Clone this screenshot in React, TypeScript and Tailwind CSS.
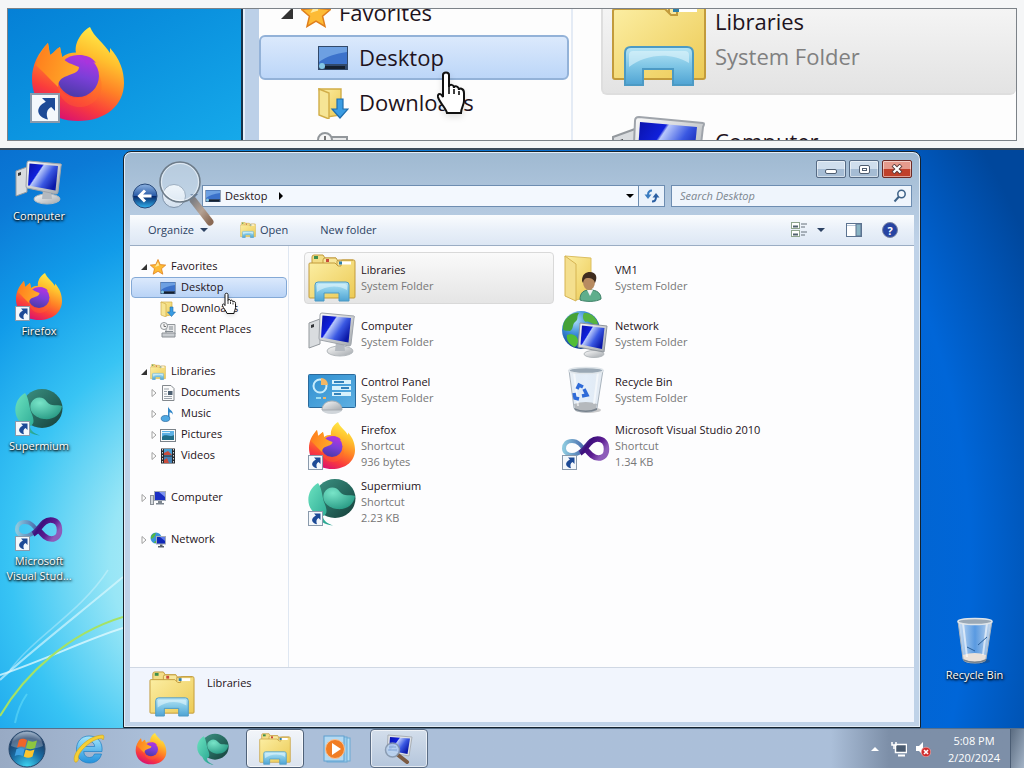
import { type ReactNode } from "react"
import clsx from "clsx"

type IconProps = { className?: string }

const Gradients = () => (
  <svg width="0" height="0" className="absolute" aria-hidden="true">
    <defs>
      <linearGradient id="fox" x1="0.8" y1="0" x2="0.35" y2="1">
        <stop offset="0" stopColor="#fff44f" />
        <stop offset="0.3" stopColor="#ffc02e" />
        <stop offset="0.55" stopColor="#ff8026" />
        <stop offset="0.78" stopColor="#fa3c3c" />
        <stop offset="1" stopColor="#d81172" />
      </linearGradient>
      <linearGradient id="foxHead" x1="0" y1="0" x2="1" y2="0.3">
        <stop offset="0" stopColor="#ff7a1c" />
        <stop offset="1" stopColor="#ffa928" />
      </linearGradient>
      <linearGradient id="globePurple" x1="0.7" y1="0" x2="0.4" y2="1">
        <stop offset="0" stopColor="#b833e1" />
        <stop offset="0.5" stopColor="#7b3fd8" />
        <stop offset="1" stopColor="#4c3aa8" />
      </linearGradient>
      <linearGradient id="folder" x1="0" y1="0" x2="1" y2="1">
        <stop offset="0" stopColor="#fcefa5" />
        <stop offset="1" stopColor="#ecca55" />
      </linearGradient>
      <linearGradient id="holder" x1="0" y1="0" x2="0" y2="1">
        <stop offset="0" stopColor="#b9e6f5" />
        <stop offset="0.5" stopColor="#7fc6e6" />
        <stop offset="1" stopColor="#4fa3d3" />
      </linearGradient>
      <linearGradient id="screen" x1="0" y1="0" x2="1" y2="0.6">
        <stop offset="0" stopColor="#0a12a8" />
        <stop offset="0.38" stopColor="#1020dc" />
        <stop offset="0.42" stopColor="#b8c8fb" />
        <stop offset="0.7" stopColor="#3a58e2" />
        <stop offset="1" stopColor="#0a18a8" />
      </linearGradient>
      <linearGradient id="metal" x1="0" y1="0" x2="1" y2="1">
        <stop offset="0" stopColor="#fafafa" />
        <stop offset="1" stopColor="#a3a8ad" />
      </linearGradient>
      <linearGradient id="tealDark" x1="0" y1="0" x2="1" y2="1">
        <stop offset="0" stopColor="#3d9484" />
        <stop offset="0.55" stopColor="#25675d" />
        <stop offset="1" stopColor="#163d38" />
      </linearGradient>
      <linearGradient id="tealLight" x1="0" y1="0" x2="1" y2="1">
        <stop offset="0" stopColor="#6ce3c0" />
        <stop offset="1" stopColor="#1e9c8a" />
      </linearGradient>
      <radialGradient id="tealBall" cx="0.3" cy="0.25" r="0.8">
        <stop offset="0" stopColor="#78e4c8" />
        <stop offset="1" stopColor="#2a9c86" />
      </radialGradient>
      <radialGradient id="earth" cx="0.35" cy="0.25" r="0.8">
        <stop offset="0" stopColor="#aeddf8" />
        <stop offset="0.45" stopColor="#3a8bd8" />
        <stop offset="1" stopColor="#0c3585" />
      </radialGradient>
      <linearGradient id="panel" x1="0" y1="0" x2="1" y2="1">
        <stop offset="0" stopColor="#2f8fd0" />
        <stop offset="1" stopColor="#5fb0e2" />
      </linearGradient>
      <linearGradient id="loopLeft" x1="0" y1="0" x2="1" y2="0">
        <stop offset="0" stopColor="#8cc8de" />
        <stop offset="1" stopColor="#3f5fa6" />
      </linearGradient>
      <linearGradient id="loopRight" x1="0" y1="0" x2="1" y2="0.5">
        <stop offset="0" stopColor="#5b6fb8" />
        <stop offset="0.35" stopColor="#3d0f7c" />
        <stop offset="0.7" stopColor="#5c1c92" />
        <stop offset="1" stopColor="#8d5cba" />
      </linearGradient>
      <linearGradient id="bin" x1="0" y1="0" x2="1" y2="0">
        <stop offset="0" stopColor="#e8eef4" stopOpacity="0.9" />
        <stop offset="0.5" stopColor="#c6dcf2" stopOpacity="0.45" />
        <stop offset="1" stopColor="#e4eaf0" stopOpacity="0.9" />
      </linearGradient>
      <linearGradient id="back" x1="0" y1="0" x2="0" y2="1">
        <stop offset="0" stopColor="#8fb4e2" />
        <stop offset="0.48" stopColor="#2b5ca8" />
        <stop offset="0.52" stopColor="#08296b" />
        <stop offset="1" stopColor="#32b4f0" />
      </linearGradient>
      <radialGradient id="orb" cx="0.5" cy="1" r="1">
        <stop offset="0" stopColor="#3fd8f4" />
        <stop offset="0.45" stopColor="#1a6fa6" />
        <stop offset="0.8" stopColor="#1b3c66" />
        <stop offset="1" stopColor="#8fa9c4" />
      </radialGradient>
      <linearGradient id="ie" x1="0" y1="0" x2="0" y2="1">
        <stop offset="0" stopColor="#a4e7fc" />
        <stop offset="1" stopColor="#2391dc" />
      </linearGradient>
      <linearGradient id="handle" x1="0" y1="0" x2="1" y2="1">
        <stop offset="0" stopColor="#7d7f84" />
        <stop offset="0.5" stopColor="#b5a294" />
        <stop offset="1" stopColor="#8a6a55" />
      </linearGradient>
    </defs>
  </svg>
)

const ShortcutArrow = () => (
  <g>
    <rect x="0.5" y="33.5" width="14" height="14" fill="#f4f8fc" stroke="#8a9aac" />
    <path d="M6 35.500H12.500V42L10.600 40C8.300 41.200 7.900 43.600 9 46.300C3.300 45 2.200 40.300 7.900 37.400Z" fill="#1d4a96" />
  </g>
)

const FirefoxIcon = ({ className, shortcut }: IconProps & { shortcut?: boolean }) => (
  <svg viewBox="0 0 48 48" className={className} aria-hidden="true">
    <path
      d="M24 47C10 47 1 38 1 26C1 19 4 13 9 8L10 14C12 13 13 11 15 10L16 15C18 13.500 20.500 12.800 23 12.800C22 8 26 2 30 0C32 5 37 8 40 13L40 10.500C45 16 47 22 47 28C47 39 38 47 24 47Z"
      fill="url(#fox)"
    />
    <circle cx="24" cy="24.500" r="10.500" fill="url(#globePurple)" />
    <path d="M24 14C28 14 31 15 33 18C30.500 17 29 17.500 28.500 19C27 16 26 15 24 14Z" fill="#a935dc" />
    <path
      d="M3 19C5 13 7 10 9 8L10 14C12 13 13 11 15 10L16 15C18 18 21 18.500 24.500 20C24.500 23 20.500 23.500 18.500 24.500C15.500 25.500 14 27 14 30C12 28 8 24 3 19Z"
      fill="url(#foxHead)"
    />
    <path d="M14 27C14 32 18 35.500 24 35.500C31 35.500 35 30 34.500 24C38 31 34 39 26 40C18 40.500 13 34 14 27Z" fill="#ff6a2a" opacity="0.35" />
    {shortcut && <ShortcutArrow />}
  </svg>
)

const SupermiumIcon = ({ className, shortcut }: IconProps & { shortcut?: boolean }) => (
  <svg viewBox="0 0 48 48" className={className} aria-hidden="true">
    <ellipse cx="27" cy="20.500" rx="20.500" ry="19.500" fill="url(#tealDark)" />
    <path d="M10 5C14 10 14 18 16 24C19 31 20 36 15 38C15 42 18 45 25 47.500C16 47 10 42 8 36C-3 29 -2 12 10 5Z" fill="url(#tealLight)" />
    <path d="M16 15C20 8 28 8 32 14C36 19 42 16 47 18C46 27 38 32 29 31C21 30 13 24 16 15Z" fill="url(#tealBall)" />
    {shortcut && <ShortcutArrow />}
  </svg>
)

const VisualStudioIcon = ({ className, shortcut }: IconProps & { shortcut?: boolean }) => (
  <svg viewBox="0 0 48 48" className={className} aria-hidden="true">
    <path d="M24 30C19 23 16 19 10 19C4.500 19 2 22.500 2 26.500C2 30.500 6 33 10 33C17 33 20 28 24 24" fill="none" stroke="url(#loopLeft)" strokeWidth="4" />
    <path
      d="M18 31C25 27 27 17 35.500 17C41.500 17 44.500 21 44.500 27C44.500 33 41 36 36.500 36C31 36 28 32 22 25"
      fill="none"
      stroke="url(#loopRight)"
      strokeWidth="5.500"
    />
    {shortcut && <ShortcutArrow />}
  </svg>
)

const LibrariesIcon = ({ className }: IconProps) => (
  <svg viewBox="0 0 48 48" className={className} aria-hidden="true">
    <path d="M4 8V3Q4 1 6 1H15L17 4H28V12H4Z" fill="#f3dd86" stroke="#c29b3c" />
    <rect x="6" y="2" width="4" height="3" fill="#3f8f4c" />
    <path d="M15 10V6Q15 4 17 4H28L30 7H42V14H15Z" fill="#f8e79c" stroke="#c29b3c" />
    <rect x="18" y="5" width="3" height="3" fill="#c94a3a" />
    <path d="M1 10Q1 9 2 9H27L30 12H33V7Q33 6 35 6H46Q47 6 47 8V43Q47 44 46 44H2Q1 44 1 43Z" fill="url(#folder)" stroke="#c29b3c" />
    <path d="M29 11V7Q29 6 31 6H45" fill="none" stroke="#c29b3c" />
    <rect x="32" y="7.500" width="11" height="3" fill="#fff" />
    <rect x="31" y="7.500" width="3" height="3" fill="#2f80a8" />
    <path d="M7 47V31Q7 28 10 28H38Q41 28 41 31V47H31V39H16V47Z" fill="url(#holder)" stroke="#4c9ac4" />
    <path d="M9 38V32Q9 30 11 30H37Q39 30 39 32V36C29 30 17 32 9 38Z" fill="#e6f8fd" opacity="0.55" />
  </svg>
)

const ComputerIcon = ({ className }: IconProps) => (
  <svg viewBox="0 0 48 48" className={className} aria-hidden="true">
    <path d="M1 13L12 9V34L1 38Z" fill="#d9dcdf" stroke="#94999e" />
    <path d="M3 15L6 14V17L3 18Z" fill="#34373a" />
    <ellipse cx="32" cy="41" rx="13" ry="5" fill="url(#metal)" stroke="#b3b8bc" />
    <path d="M28 32H36L37 41H27Z" fill="#b4b9bf" />
    <path d="M14 3L46 6Q47 6 46 8L43 34Q43 36 41 36L12 30Q11 30 11 28L12 5Q12 3 14 3Z" fill="url(#metal)" stroke="#9fa4ab" />
    <path d="M14.500 5.500L43 8L40.500 32.500L13 27.500Z" fill="url(#screen)" />
  </svg>
)

const NetworkIcon = ({ className }: IconProps) => (
  <svg viewBox="0 0 48 48" className={className} aria-hidden="true">
    <circle cx="19" cy="20" r="19" fill="url(#earth)" />
    <path d="M4 9C8 4 13 2 17 3C14 7 17 9 13 12C10 14 12 19 8 21C4 20 1 22 1 18C1 14 2 11 4 9Z" fill="#45a238" />
    <path d="M22 3C29 2 35 8 36 14C31 16 27 10 24 12C21 11 20 6 22 3Z" fill="#56b43f" />
    <path d="M5 25C10 23 16 26 16 31C16 34 14 37 12 37C7 34 4 30 5 25Z" fill="#52bd35" />
    <ellipse cx="32" cy="44" rx="10" ry="3.500" fill="url(#metal)" stroke="#b3b8bc" />
    <path d="M18 13L45 16L42 42L16 37Z" fill="url(#metal)" stroke="#8f959c" />
    <path d="M20 15.500L42.500 18L40 39L18.500 34.500Z" fill="url(#screen)" />
  </svg>
)

const ControlPanelIcon = ({ className }: IconProps) => (
  <svg viewBox="0 0 48 48" className={className} aria-hidden="true">
    <rect x="0.500" y="8.500" width="47" height="33" rx="1" fill="url(#panel)" stroke="#2b6a9c" />
    <circle cx="12" cy="20" r="6.500" fill="none" stroke="#c8ecfb" strokeWidth="2" />
    <path d="M13 19V12A7 7 0 0 1 20 19Z" fill="#f3b765" />
    <path d="M24 16H43M24 22H43M24 28H43" stroke="#d8f2fc" strokeWidth="4" />
    <path d="M26 16H36M33 22H41M26 28H33" stroke="#3382bb" strokeWidth="2" />
    <path d="M8 32H13" stroke="#9bdcf0" strokeWidth="2" />
    <path d="M15 32H18" stroke="#f3b765" strokeWidth="2" />
    <ellipse cx="24" cy="44" rx="10" ry="4" fill="#d0d5da" />
    <path d="M14 44C14 38 19 35 24 35C29 35 34 38 34 44Z" fill="url(#metal)" stroke="#a8adb2" />
  </svg>
)

const UserFolderIcon = ({ className }: IconProps) => (
  <svg viewBox="0 0 48 48" className={className} aria-hidden="true">
    <path d="M3 2L29 4V42L14 46Z" fill="url(#folder)" stroke="#dcbf62" />
    <path d="M3 2L14 10V47L3 42Z" fill="#f4df8e" stroke="#d6b453" />
    <path d="M18 46C18 38 22 36 28 36C35 36 39 39 39 45C34 48 24 48 18 46Z" fill="#5fae8c" stroke="#3c7f66" />
    <path d="M25 36L28 42L31 36Z" fill="#f3f3f3" />
    <ellipse cx="27" cy="28" rx="6" ry="8" fill="#b78b61" />
    <path d="M20 27C20 20 24 18 28 18C34 18 36 23 33 29C32 25 29 24 26 24C23 24 22 25 21 29Z" fill="#3e2c1f" />
  </svg>
)

const RecycleBinIcon = ({ className, full }: IconProps & { full?: boolean }) => (
  <svg viewBox="0 0 48 48" className={className} aria-hidden="true">
    <ellipse cx="26" cy="44" rx="13" ry="3" fill="#333" opacity="0.25" />
    <path d="M7 4L12 42Q13 46 24 46Q34 46 35 42L41 4Z" fill="url(#bin)" stroke="#aab4be" />
    <path d="M12 38Q24 34 35 38L34 43Q24 47 13 43Z" fill={full ? "#e9e1da" : "#b5b9bd"} />
    <path d="M12 42Q24 47 35 42V44Q24 48 13 44Z" fill="#77818b" />
    <path d="M12 6L16 40M36 6L32 38" stroke="#fff" strokeWidth="2" opacity="0.6" />
    <ellipse cx="24" cy="4.500" rx="17" ry="3" fill="#9aa8b5" stroke="#dfe5ea" strokeWidth="1.500" />
    {full ? (
      <path d="M36 20L27 28M16 30L24 34" stroke="#29609c" />
    ) : (
      <path
        d="M15 23L17 19L21 21M22 23L25 29L20 30M17 33L13 32L12 27"
        fill="none"
        stroke="#2f6bd8"
        strokeWidth="3.500"
      />
    )}
  </svg>
)

const DesktopSmallIcon = ({ className }: IconProps) => (
  <svg viewBox="0 0 16 16" className={className} aria-hidden="true">
    <rect x="0.500" y="2" width="15" height="12" fill="#31496b" />
    <path d="M1 2.500H15V11H1Z" fill="#3c72cb" />
    <path d="M1 2.500H15V5C9 6 5 7 1 10Z" fill="#6da0e2" />
    <rect x="4" y="12" width="10" height="1.500" fill="#15202f" />
    <circle cx="2.500" cy="12" r="1.500" fill="#83c6e5" />
  </svg>
)

const DownloadsIcon = ({ className }: IconProps) => (
  <svg viewBox="0 0 16 16" className={className} aria-hidden="true">
    <path d="M1 1L12 1V14L5 15Z" fill="url(#folder)" stroke="#d1ad48" strokeWidth="0.700" />
    <path d="M1 1L6 3V16L1 14Z" fill="#f6e595" stroke="#d1ad48" strokeWidth="0.700" />
    <path d="M10 6H13V11H15.500L11.500 15.500L7.500 11H10Z" fill="#3b9ce2" stroke="#1f6eae" strokeWidth="0.600" />
  </svg>
)

const RecentIcon = ({ className }: IconProps) => (
  <svg viewBox="0 0 16 16" className={className} aria-hidden="true">
    <path d="M6 2.500H15V12H6Z" fill="#e9eaeb" stroke="#92979b" />
    <path d="M9 5H13M9 7H13M5 9.500H13" stroke="#838a91" />
    <path d="M2 11H15V15H2Z" fill="#c8ccd0" stroke="#8b9095" />
    <circle cx="4" cy="4" r="3.500" fill="#f5f5f5" stroke="#92979b" />
    <path d="M4 2V4.500H6" fill="none" stroke="#555" strokeWidth="0.800" />
  </svg>
)

const StarIcon = ({ className }: IconProps) => (
  <svg viewBox="0 0 16 16" className={className} aria-hidden="true">
    <path d="M8 0.500L10.200 5.600L15.700 6.100L11.500 9.700L12.800 15.200L8 12.300L3.200 15.200L4.500 9.700L0.300 6.100L5.800 5.600Z" fill="#fdbb35" stroke="#e07f1c" strokeWidth="0.800" />
    <path d="M8 3L9.200 6.600L5 8Z" fill="#ffeaa0" />
  </svg>
)

const DocumentIcon = ({ className }: IconProps) => (
  <svg viewBox="0 0 16 16" className={className} aria-hidden="true">
    <path d="M2.500 0.500H11L14 3.500V15.500H2.500Z" fill="#fbfbfb" stroke="#84898e" />
    <path d="M4 4H9M4 6.500H7M4 9H7M4 11.500H12M4 13.500H12" stroke="#9aa2aa" />
    <rect x="8" y="6" width="4.500" height="4" fill="#4d5f70" />
  </svg>
)

const MusicIcon = ({ className }: IconProps) => (
  <svg viewBox="0 0 16 16" className={className} aria-hidden="true">
    <path d="M8 0.500C9 4 13 4 13 9C12.500 7 11 6.500 9.500 6.500V12.500H8Z" fill="#2f86c9" />
    <ellipse cx="5.500" cy="12.500" rx="4.300" ry="3" fill="#4fa8e2" stroke="#23659d" strokeWidth="0.700" />
  </svg>
)

const PicturesIcon = ({ className }: IconProps) => (
  <svg viewBox="0 0 16 16" className={className} aria-hidden="true">
    <rect x="0.500" y="2.500" width="15" height="12" fill="#fafafa" stroke="#7a8289" />
    <rect x="2" y="4" width="12" height="9" fill="#5cb0e4" />
    <path d="M2 10C6 6 9 11 14 8V13H2Z" fill="#1f6d88" />
    <path d="M2 5H10V6H2Z" fill="#d5effa" />
  </svg>
)

const VideosIcon = ({ className }: IconProps) => (
  <svg viewBox="0 0 16 16" className={className} aria-hidden="true">
    <rect x="1" y="0.500" width="14" height="15" fill="#26292d" />
    <path d="M2.500 1V15M13.500 1V15" stroke="#d5d8db" strokeDasharray="1.500 1.500" />
    <rect x="4" y="1" width="8" height="6.500" fill="#4a9ed2" />
    <rect x="4" y="8.500" width="8" height="6.500" fill="#4682b4" />
    <path d="M4 5L8 3L12 7H4ZM4 12L7 10L9 15H4Z" fill="#c84c3c" />
  </svg>
)

// Flat monitor used by the navigation tree
const ComputerSmallIcon = ({ className }: IconProps) => (
  <svg viewBox="0 0 16 16" className={className} aria-hidden="true">
    <rect x="0.500" y="5.500" width="3" height="9" fill="#d4d8dc" stroke="#8b9198" />
    <rect x="4.500" y="1.500" width="11" height="9" fill="#1a2fc4" stroke="#a3abb8" />
    <path d="M9 2H15V7Z" fill="#7f95f0" />
    <path d="M8 11H12V13H14V14.500H6V13H8Z" fill="#7d868f" />
  </svg>
)

const NetworkSmallIcon = ({ className }: IconProps) => (
  <svg viewBox="0 0 16 16" className={className} aria-hidden="true">
    <circle cx="6" cy="6" r="5.500" fill="#3a94d8" />
    <path d="M1 5C2 2 4 1 6 1C5 4 4 6 1 7ZM4 11C5 8 8 8 8 11Z" fill="#56b83f" />
    <rect x="6.500" y="4.500" width="9" height="7.500" fill="#1028b8" stroke="#a3abb8" />
    <path d="M10 5H15V9Z" fill="#5f7cec" />
    <path d="M10 12.500H12.500V14H14V15.500H8V14H10Z" fill="#59626c" />
  </svg>
)

const MediaPlayerIcon = ({ className }: IconProps) => (
  <svg viewBox="0 0 32 32" className={className} aria-hidden="true">
    <rect x="9" y="5" width="20" height="23" fill="#b4ddf4" stroke="#6aa9d4" />
    <rect x="6" y="4" width="20" height="25" fill="#98cdec" stroke="#6aa9d4" />
    <rect x="3" y="3" width="20" height="25" fill="#b3d9f2" stroke="#5fa0cf" />
    <circle cx="14" cy="16" r="9.500" fill="#f07d24" stroke="#f9c295" />
    <path d="M11 10L20 16L11 22Z" fill="#fff" />
  </svg>
)

const ExplorerIcon = ({ className }: IconProps) => (
  <svg viewBox="0 0 32 32" className={className} aria-hidden="true">
    <path d="M16 3C8 3 3.500 9 3.500 16.500C3.500 25 9 30 16.500 30C22.500 30 27 27 28.500 21H21.500C20.500 23.500 18.800 24.500 16.500 24.500C13 24.500 11 22.500 10.700 18.500H29C30 9 24.500 3 16 3ZM10.900 13.500C11.500 10 13.500 8.500 16.300 8.500C19.200 8.500 21.300 10 21.700 13.500Z" fill="url(#ie)" stroke="#1c7ec4" strokeWidth="0.700" />
    <path d="M2 29C-3 22 14 2 30 2C31.500 3 31 5 30 7C30 4.500 26 5 20 8C12 13 4 21 5.500 26C5 28.500 3 30 2 29Z" fill="#f5cf35" stroke="#c99a14" strokeWidth="0.500" />
  </svg>
)

const StartOrb = ({ className }: IconProps) => (
  <svg viewBox="0 0 38 38" className={className} aria-hidden="true">
    <circle cx="19" cy="19" r="18" fill="url(#orb)" stroke="#27476b" />
    <path d="M3 16C4 7 11 2 19 2C27 2 34 7 35 16C26 20 12 20 3 16Z" fill="#fff" opacity="0.25" />
    <path d="M11 10C14 8 16 8.500 19 10L17 17.500C14.500 16 12 16 9 17.500Z" fill="#f0652a" />
    <path d="M20 10.500C23 12 26 12 29 10.500L27 18C24 19.500 21 19.500 18 18Z" fill="#8ec63f" />
    <path d="M8.500 19C11.500 17.500 14 17.500 16.700 19L14.700 26C12 24.500 9.500 24.500 6.700 26Z" fill="#3f9fe0" />
    <path d="M17.700 19.500C20.500 21 23.500 21 26.500 19.500L24.500 26.500C21.500 28.500 18.500 28 15.700 26.500Z" fill="#fcc52c" />
  </svg>
)

const MagnifierAppIcon = ({ className }: IconProps) => (
  <svg viewBox="0 0 32 32" className={className} aria-hidden="true">
    <path d="M5 2L29 4L26 23L4 19Z" fill="#dfe2e5" stroke="#aab0b6" />
    <path d="M7 4L27 5.500L24.500 21L6 17.500Z" fill="url(#screen)" />
    <path d="M15 22L24 29" stroke="#7b5a42" strokeWidth="4" strokeLinecap="round" />
    <circle cx="9.500" cy="17" r="7" fill="#b9d2f0" opacity="0.9" stroke="#8597ad" strokeWidth="1.500" />
    <path d="M5 17H14M6 14H13" stroke="#7fa3d0" />
  </svg>
)

const HandCursor = ({ className }: IconProps) => (
  <svg viewBox="0 0 18 24" className={className} aria-hidden="true">
    <path
      d="M4 2.500C4 0.800 7 0.800 7 2.500V8.500C7 7 9.500 7 9.500 9C9.500 7.500 12 8 12 10C12 8.800 14.500 9 14.500 11.500V15.500C14.500 17.500 13 19 13 21.500H6C5.500 19 2 16 1.500 13.500C1.200 11.500 3 11.500 4 13.500Z"
      fill="#fff"
      stroke="#111"
    />
    <path d="M7 8.500V12M9.500 9.500V12M12 10.500V12.500" stroke="#111" strokeWidth="0.800" />
  </svg>
)

const MagnifierCursor = ({ className }: IconProps) => (
  <svg viewBox="0 0 60 70" className={className} aria-hidden="true">
    <path d="M35 39L52 61" stroke="url(#handle)" strokeWidth="7" strokeLinecap="round" />
    <circle cx="22" cy="21" r="20" fill="#e9f2fa" fillOpacity="0.3" stroke="#6d7b88" strokeWidth="1.500" />
    <circle cx="22" cy="21" r="18.500" fill="none" stroke="#fff" strokeOpacity="0.6" />
  </svg>
)

const LoupeIcon = ({ className }: IconProps) => (
  <svg viewBox="0 0 14 14" className={className} aria-hidden="true">
    <circle cx="8.500" cy="5" r="3.700" fill="#f4f9fe" stroke="#3e6287" strokeWidth="1.500" />
    <path d="M5.800 7.800L1.500 12.500" stroke="#3e6287" strokeWidth="2" />
  </svg>
)

const DownTriangle = ({ className }: IconProps) => (
  <svg viewBox="0 0 8 4" className={clsx("h-1 w-2", className)} aria-hidden="true">
    <path d="M0 0H8L4 4Z" fill="currentColor" />
  </svg>
)

const Expander = ({ open, className }: IconProps & { open?: boolean }) => (
  <svg viewBox="0 0 8 8" className={clsx("h-2 w-2", className)} aria-hidden="true">
    {open ? <path d="M7 1V7H1Z" fill="#333" /> : <path d="M2 0.500L6 4L2 7.500Z" fill="#fff" stroke="#a0a0a0" />}
  </svg>
)

type TreeNode = { label: string; icon: ReactNode; open?: boolean; leaf?: boolean; selected?: boolean }

const small = "h-4 w-4 shrink-0"

const tree: { root: TreeNode; children: TreeNode[] }[] = [
  {
    root: { label: "Favorites", icon: <StarIcon className={small} />, open: true },
    children: [
      { label: "Desktop", icon: <DesktopSmallIcon className={small} />, leaf: true, selected: true },
      { label: "Downloads", icon: <DownloadsIcon className={small} />, leaf: true },
      { label: "Recent Places", icon: <RecentIcon className={small} />, leaf: true },
    ],
  },
  {
    root: { label: "Libraries", icon: <LibrariesIcon className={small} />, open: true },
    children: [
      { label: "Documents", icon: <DocumentIcon className={small} /> },
      { label: "Music", icon: <MusicIcon className={small} /> },
      { label: "Pictures", icon: <PicturesIcon className={small} /> },
      { label: "Videos", icon: <VideosIcon className={small} /> },
    ],
  },
  { root: { label: "Computer", icon: <ComputerSmallIcon className={small} /> }, children: [] },
  { root: { label: "Network", icon: <NetworkSmallIcon className={small} /> }, children: [] },
]

const large = "h-12 w-12 shrink-0"

const files = [
  { name: "Libraries", lines: ["System Folder"], icon: <LibrariesIcon className={large} />, selected: true },
  { name: "VM1", lines: ["System Folder"], icon: <UserFolderIcon className={large} /> },
  { name: "Computer", lines: ["System Folder"], icon: <ComputerIcon className={large} /> },
  { name: "Network", lines: ["System Folder"], icon: <NetworkIcon className={large} /> },
  { name: "Control Panel", lines: ["System Folder"], icon: <ControlPanelIcon className={large} /> },
  { name: "Recycle Bin", lines: ["System Folder"], icon: <RecycleBinIcon className={large} /> },
  { name: "Firefox", lines: ["Shortcut", "936 bytes"], icon: <FirefoxIcon className={large} shortcut /> },
  {
    name: "Microsoft Visual Studio 2010",
    lines: ["Shortcut", "1.34 KB"],
    icon: <VisualStudioIcon className={large} shortcut />,
  },
  { name: "Supermium", lines: ["Shortcut", "2.23 KB"], icon: <SupermiumIcon className={large} shortcut /> },
]

const TreeRow = ({ node, child }: { node: TreeNode; child?: boolean }) => (
  <button
    className={clsx(
      "flex h-[21px] w-full items-center rounded-sm border text-left",
      child ? "pl-[18px]" : "pl-2",
      node.selected ? "border-[#84a9d6] bg-linear-to-b from-[#dbe9fc] to-[#b9d3f6]" : "border-transparent",
    )}
  >
    <Expander open={node.open} className={node.leaf ? "invisible" : undefined} />
    <span className="ml-0.5">{node.icon}</span>
    <span className="ml-[5px] whitespace-nowrap">{node.label}</span>
  </button>
)

const DesktopIcon = ({ icon, label }: { icon: ReactNode; label: string }) => (
  <button className="flex h-[111px] w-[78px] flex-col items-center text-white">
    {icon}
    <span className="mt-0.5 text-center leading-[15px] [text-shadow:0_1px_2px_#000,1px_1px_3px_#000]">{label}</span>
  </button>
)

// Docked magnifier strip, twice the size of the desktop below it
const Lens = () => (
  <section className="h-[150px] shrink-0 border-b-2 border-[#3c4a58] bg-[#f5f6f7] px-[7px] py-2" aria-label="Magnifier">
    <div className="flex h-[133px] overflow-hidden border border-[#7c8288] bg-[#fdfdfd] text-[22px] text-[#1e1320]">
      <div className="flex w-[235px] shrink-0 items-center border-r-2 border-[#16324a] bg-linear-to-br from-[#0580d6] to-[#16a9ea] pl-[22px]">
        <FirefoxIcon className="h-[100px] w-24" shortcut />
      </div>
      <div className="w-4 shrink-0 border-l-2 border-[#e6effa] bg-[#bcd0e8]" />
      <div className="-mt-[19px] w-[314px] shrink-0 border-r-2 border-[#e4ebf5] pr-0.5">
        <div className="flex h-[45px] items-center pl-5">
          <Expander open className="h-4 w-4" />
          <StarIcon className="ml-1.5 h-[30px] w-[30px]" />
          <span className="ml-2">Favorites</span>
        </div>
        <div className="flex h-[45px] items-center rounded-md border-2 border-[#93b2d8] bg-linear-to-b from-[#dbe9fc] to-[#bcd6f8] pl-14">
          <DesktopSmallIcon className="h-8 w-8" />
          <span className="ml-2.5">Desktop</span>
        </div>
        <div className="relative flex h-[45px] items-center pl-[58px]">
          <DownloadsIcon className="h-8 w-8" />
          <span className="ml-2.5">Downloads</span>
          <HandCursor className="absolute -top-2.5 left-[176px] h-12 w-9 drop-shadow-md" />
        </div>
        <div className="flex h-[45px] items-center pl-[58px]">
          <RecentIcon className="h-8 w-8" />
          <span className="ml-2.5">Recent Places</span>
        </div>
      </div>
      <div className="-mt-[26px] flex-1 pl-7 leading-[35px]">
        <div className="flex h-[112px] items-center rounded-md border-2 border-r-0 border-[#dedede] bg-linear-to-b from-[#f9f9f9] to-[#e3e3e3] pl-2">
          <LibrariesIcon className="h-[100px] w-24" />
          <div className="ml-2">
            <p>Libraries</p>
            <p className="text-[#808080]">System Folder</p>
          </div>
        </div>
        <div className="mt-2 flex h-[112px] items-center pl-2.5">
          <ComputerIcon className="h-[100px] w-24" />
          <div className="ml-2">
            <p>Computer</p>
            <p className="text-[#808080]">System Folder</p>
          </div>
        </div>
      </div>
    </div>
  </section>
)

const captionButton = "flex h-[18px] w-[30px] items-center justify-center rounded-xs border shadow-[inset_0_0_0_1px_#ffffff80]"

const TitleBar = () => (
  <div className="flex justify-end gap-[3px] pr-0.5 pt-2">
    <button aria-label="Minimize" className={clsx(captionButton, "border-[#566b85] bg-linear-to-b from-[#cfdeed] from-50% to-[#a5bcd4] to-50%")}>
      <span className="mt-1 h-[5px] w-3 rounded-xs border border-[#4e5d70] bg-white" />
    </button>
    <button aria-label="Maximize" className={clsx(captionButton, "border-[#566b85] bg-linear-to-b from-[#cfdeed] from-50% to-[#a5bcd4] to-50%")}>
      <span className="flex h-[9px] w-[11px] items-center justify-center rounded-xs border border-[#4e5d70] bg-white">
        <span className="h-[3px] w-[5px] border border-[#4e5d70]" />
      </span>
    </button>
    <button aria-label="Close" className={clsx(captionButton, "border-[#6b2a26] bg-linear-to-b from-[#e59a8c] from-50% to-[#c0402a] to-50%")}>
      <svg viewBox="0 0 12 10" className="h-2.5 w-3" aria-hidden="true">
        <path d="M2 1L10 9M10 1L2 9" stroke="#5a3a3a" strokeWidth="4" />
        <path d="M2.500 1.500L9.500 8.500M9.500 1.500L2.500 8.500" stroke="#fff" strokeWidth="2.200" />
      </svg>
    </button>
  </div>
)

const AddressRow = () => (
  <div className="relative mt-[7px] flex h-[22px] items-center px-0.5">
    <button aria-label="Back" className="-my-1 shrink-0">
      <svg viewBox="0 0 26 26" className="h-[26px] w-[26px]" aria-hidden="true">
        <circle cx="13" cy="13" r="12" fill="url(#back)" stroke="#284a7c" />
        <path d="M19.500 13H8M13 7.500L7.500 13L13 18.500" fill="none" stroke="#fff" strokeWidth="3" />
      </svg>
    </button>
    <button aria-label="Forward" className="-my-px ml-1 h-6 w-6 shrink-0 rounded-full border border-[#7f93aa] bg-linear-to-b from-[#f2f7fc] to-[#d3e0ee]" />
    <button aria-label="Recent pages" className="ml-1 shrink-0">
      <DownTriangle className="text-[#55759b]" />
    </button>
    <div className="ml-1 flex h-[22px] flex-1 items-center border border-[#6d8db1] bg-[#f3f8fe]">
      <DesktopSmallIcon className="ml-0.5 h-4 w-4" />
      <button className="ml-1">Desktop</button>
      <svg viewBox="0 0 4 8" className="ml-3 h-2 w-1" aria-hidden="true">
        <path d="M0 0L4 4L0 8Z" fill="#000" />
      </svg>
      <button aria-label="Previous locations" className="ml-auto mr-1">
        <DownTriangle className="text-black" />
      </button>
    </div>
    <button aria-label="Refresh" className="-ml-px flex h-[22px] w-[27px] items-center justify-center border border-[#6d8db1] bg-[#eaf2fb]">
      <svg viewBox="0 0 16 14" className="h-3.5 w-4" aria-hidden="true">
        <path d="M8 1.500C4.500 1.500 4 4 4 6" fill="none" stroke="#3a7cc0" strokeWidth="2" />
        <path d="M0.500 5.500H7.500L4 10Z" fill="#3a7cc0" />
        <path d="M8 12.500C11.500 12.500 12 10 12 8" fill="none" stroke="#2b5fa3" strokeWidth="2" />
        <path d="M8.500 8.500H15.500L12 4Z" fill="#2b5fa3" />
      </svg>
    </button>
    <label className="ml-1.5 flex h-[22px] w-[241px] items-center border border-[#6d8db1] bg-[#eff5fc] pl-2 pr-1">
      <input type="text" aria-label="Search Desktop" placeholder="Search Desktop" className="min-w-0 flex-1 italic outline-none placeholder:text-[#7c858f]" />
      <LoupeIcon className="h-3.5 w-3.5" />
    </label>
    <MagnifierCursor className="absolute -top-6 left-7 h-[70px] w-[60px]" />
  </div>
)

const Toolbar = () => (
  <div className="mt-2 flex h-[31px] shrink-0 items-center border-b border-[#9badc4] bg-linear-to-b from-[#fafcfe] from-0% via-[#e9f0f9] via-50% to-[#dde7f4] pl-[18px] pr-4 text-[#2c4263]">
    <button className="flex items-center gap-1.5">
      Organize
      <DownTriangle />
    </button>
    <button className="ml-8 flex items-center gap-1">
      <LibrariesIcon className="h-4 w-4" />
      Open
    </button>
    <button className="ml-8">New folder</button>
    <div className="ml-auto flex items-center">
      <button aria-label="Change view" className="flex items-center gap-2.5">
        <svg viewBox="0 0 16 16" className="h-4 w-4" aria-hidden="true">
          <rect x="0.500" y="0.500" width="8" height="6" fill="#fff" stroke="#8fa58f" />
          <rect x="0.500" y="8.500" width="8" height="6" fill="#fff" stroke="#8fa58f" />
          <path d="M2 4.500H7M2 12.500H7" stroke="#51616f" strokeWidth="2" />
          <path d="M10 2H16M10 5H14M10 10H16M10 13H14" stroke="#66707a" />
        </svg>
        <DownTriangle />
      </button>
      <button aria-label="Show the preview pane" className="ml-[21px]">
        <svg viewBox="0 0 16 14" className="h-3.5 w-4" aria-hidden="true">
          <rect x="0.500" y="0.500" width="15" height="13" fill="#fff" stroke="#5c7390" />
          <path d="M1 2.500H15" stroke="#b9c8da" />
          <rect x="10" y="1" width="5" height="12" fill="#8ab4c4" stroke="#5c7390" />
        </svg>
      </button>
      <button aria-label="Get help" className="ml-5 flex h-4 w-4 items-center justify-center rounded-full border border-[#7c86a4] bg-[#2744a2] font-bold leading-none text-white">
        ?
      </button>
    </div>
  </div>
)

const ExplorerWindow = () => (
  <main className="flex min-w-0 flex-1 flex-col rounded-t-lg border border-[#14222e] bg-[#bcd1e8] bg-linear-to-b from-[#9fb9d1] to-[#bfd2e8] to-16% px-1.5 pb-[5px] shadow-[inset_0_0_0_1px_#e3edf7]">
    <TitleBar />
    <AddressRow />
    <Toolbar />
    <div className="flex min-h-0 flex-1 bg-[#fdfdfe]">
      <nav className="flex w-[159px] shrink-0 flex-col gap-[21px] overflow-hidden border-r border-[#dfe7f2] px-px pt-2.5">
        {tree.map(({ root, children }) => (
          <div key={root.label}>
            <TreeRow node={root} />
            {children.map((node) => (
              <TreeRow key={node.label} node={node} child />
            ))}
          </div>
        ))}
      </nav>
      <div className="grid flex-1 auto-rows-[52px] grid-cols-[250px_250px] content-start gap-1 overflow-hidden pl-[15px] pt-1.5">
        {files.map(({ name, lines, icon, selected }) => (
          <button
            key={name}
            className={clsx(
              "flex items-center gap-[5px] rounded-sm border pl-[3px] text-left leading-4",
              selected ? "border-[#d9d9d9] bg-linear-to-b from-[#fafafa] to-[#e5e5e5]" : "border-transparent",
            )}
          >
            {icon}
            <span className="flex flex-col">
              <span className="whitespace-nowrap text-[#1e1320]">{name}</span>
              {lines.map((line) => (
                <span key={line} className="text-[#777777]">
                  {line}
                </span>
              ))}
            </span>
          </button>
        ))}
      </div>
    </div>
    <footer className="flex h-[55px] shrink-0 gap-3 border-t border-[#d0d8e4] bg-[#f1f5fd] pl-[19px] pt-[3px]">
      <LibrariesIcon className="h-[46px] w-[46px]" />
      <span className="mt-1 leading-4 text-[#1e1320]">Libraries</span>
    </footer>
  </main>
)

const apps = [
  { name: "Internet Explorer", icon: <ExplorerIcon className="h-8 w-8" /> },
  { name: "Firefox", icon: <FirefoxIcon className="h-8 w-8" /> },
  { name: "Supermium", icon: <SupermiumIcon className="h-8 w-8" /> },
  { name: "Windows Explorer", icon: <LibrariesIcon className="h-8 w-8" />, style: "border-[#4f6178] bg-linear-to-b from-[#f2f5f9] to-[#dce4ef]" },
  { name: "Windows Media Player", icon: <MediaPlayerIcon className="h-8 w-8" /> },
  { name: "Magnifier", icon: <MagnifierAppIcon className="h-8 w-8" />, style: "border-[#5b6d85] bg-linear-to-b from-[#d3deeb] to-[#b5c6dc]" },
]

const Taskbar = () => (
  <footer className="flex h-10 shrink-0 items-center border-t border-[#56708c] bg-linear-to-r from-[#98aac4] from-0% via-[#abbfd9] via-15% to-[#abbfd9]">
    <button aria-label="Start" className="flex w-[54px] shrink-0 justify-center">
      <StartOrb className="h-[38px] w-[38px]" />
    </button>
    <div className="ml-1.5 flex gap-1">
      {apps.map(({ name, icon, style }) => (
        <button
          key={name}
          aria-label={name}
          className={clsx(
            "flex h-[39px] w-[58px] items-center justify-center rounded-sm border",
            style ? clsx("shadow-[inset_0_0_0_1px_#ffffffa0]", style) : "border-transparent",
          )}
        >
          {icon}
        </button>
      ))}
    </div>
    <div className="ml-auto flex h-full items-center bg-linear-to-r from-transparent to-[#7d8fa8] to-30% pl-10 text-white">
      <button aria-label="Show hidden icons">
        <DownTriangle className="rotate-180" />
      </button>
      <svg viewBox="0 0 16 16" className="ml-3 h-4 w-4" aria-hidden="true">
        <rect x="4.500" y="3.500" width="11" height="8" fill="#4a5b70" stroke="#fff" strokeWidth="1.500" />
        <path d="M7 14.500H14" stroke="#fff" strokeWidth="2" />
        <path d="M1 1V4H5V1M3 4V8" fill="none" stroke="#fff" strokeWidth="1.500" />
      </svg>
      <svg viewBox="0 0 16 16" className="ml-2 h-4 w-4" aria-hidden="true">
        <path d="M1 5H4L8 1V14L4 10H1Z" fill="#fff" />
        <circle cx="11" cy="11" r="4.800" fill="#d12e2e" stroke="#f5b9b9" strokeWidth="0.600" />
        <path d="M9 9L13 13M13 9L9 13" stroke="#fff" strokeWidth="1.600" />
      </svg>
      <time className="ml-2 w-[70px] text-center leading-[17px]">
        5:08 PM
        <br />
        2/20/2024
      </time>
      <button aria-label="Show desktop" className="ml-px h-full w-3.5 border-l border-[#4b5d74] bg-linear-to-br from-[#5b6c81] to-[#a4b4c7]" />
    </div>
  </footer>
)

const Wallpaper = () => (
  <svg viewBox="0 0 123 200" className="absolute bottom-0 left-0 h-[200px] w-[123px]" fill="none" aria-hidden="true">
    <path d="M0 152C25 128 80 85 123 49" stroke="#e6fbff" strokeOpacity="0.6" strokeWidth="2" />
    <path d="M0 147C45 132 85 112 123 100" stroke="#e6fbff" strokeOpacity="0.75" strokeWidth="2" />
    <path d="M10 142C35 108 80 85 108 42" stroke="#fff" strokeOpacity="0.3" strokeWidth="1.500" />
    <path d="M0 188C25 145 70 105 123 89" stroke="#a5e264" strokeWidth="2" />
    <path d="M15 195C18 180 22 173 27 166" stroke="#9ff" strokeOpacity="0.3" strokeWidth="2" />
  </svg>
)

const App = () => (
  <div className="flex h-screen min-h-[600px] flex-col overflow-hidden font-['Open_Sans','Noto_Sans',sans-serif] text-[11px] text-[#1e1320]">
    <Gradients />
    <Lens />
    <div className="relative flex min-h-0 flex-1 bg-[radial-gradient(circle_at_250px_410px,#d8f6f8_0,#98e6f6_140px,#38c4f4_240px,#119be9_340px,#0b7ad6_430px,#0563c8_560px,#0066d8_720px,#00479c_840px)] pt-px">
      <Wallpaper />
      <div className="relative flex w-[123px] shrink-0 flex-col gap-1 pt-[7px]">
        <DesktopIcon label="Computer" icon={<ComputerIcon className={large} />} />
        <DesktopIcon label="Firefox" icon={<FirefoxIcon className={large} shortcut />} />
        <DesktopIcon label="Supermium" icon={<SupermiumIcon className={large} shortcut />} />
        <DesktopIcon label="Microsoft Visual Stud..." icon={<VisualStudioIcon className={large} shortcut />} />
      </div>
      <div className="relative flex min-w-0 flex-1">
        <ExplorerWindow />
        <HandCursor className="absolute left-[98px] top-[141px] h-6 w-[18px] drop-shadow-sm" />
      </div>
      <div className="flex w-[103px] shrink-0 flex-col items-center justify-end pl-1">
        <DesktopIcon label="Recycle Bin" icon={<RecycleBinIcon className={large} full />} />
      </div>
    </div>
    <Taskbar />
  </div>
)

export default App
